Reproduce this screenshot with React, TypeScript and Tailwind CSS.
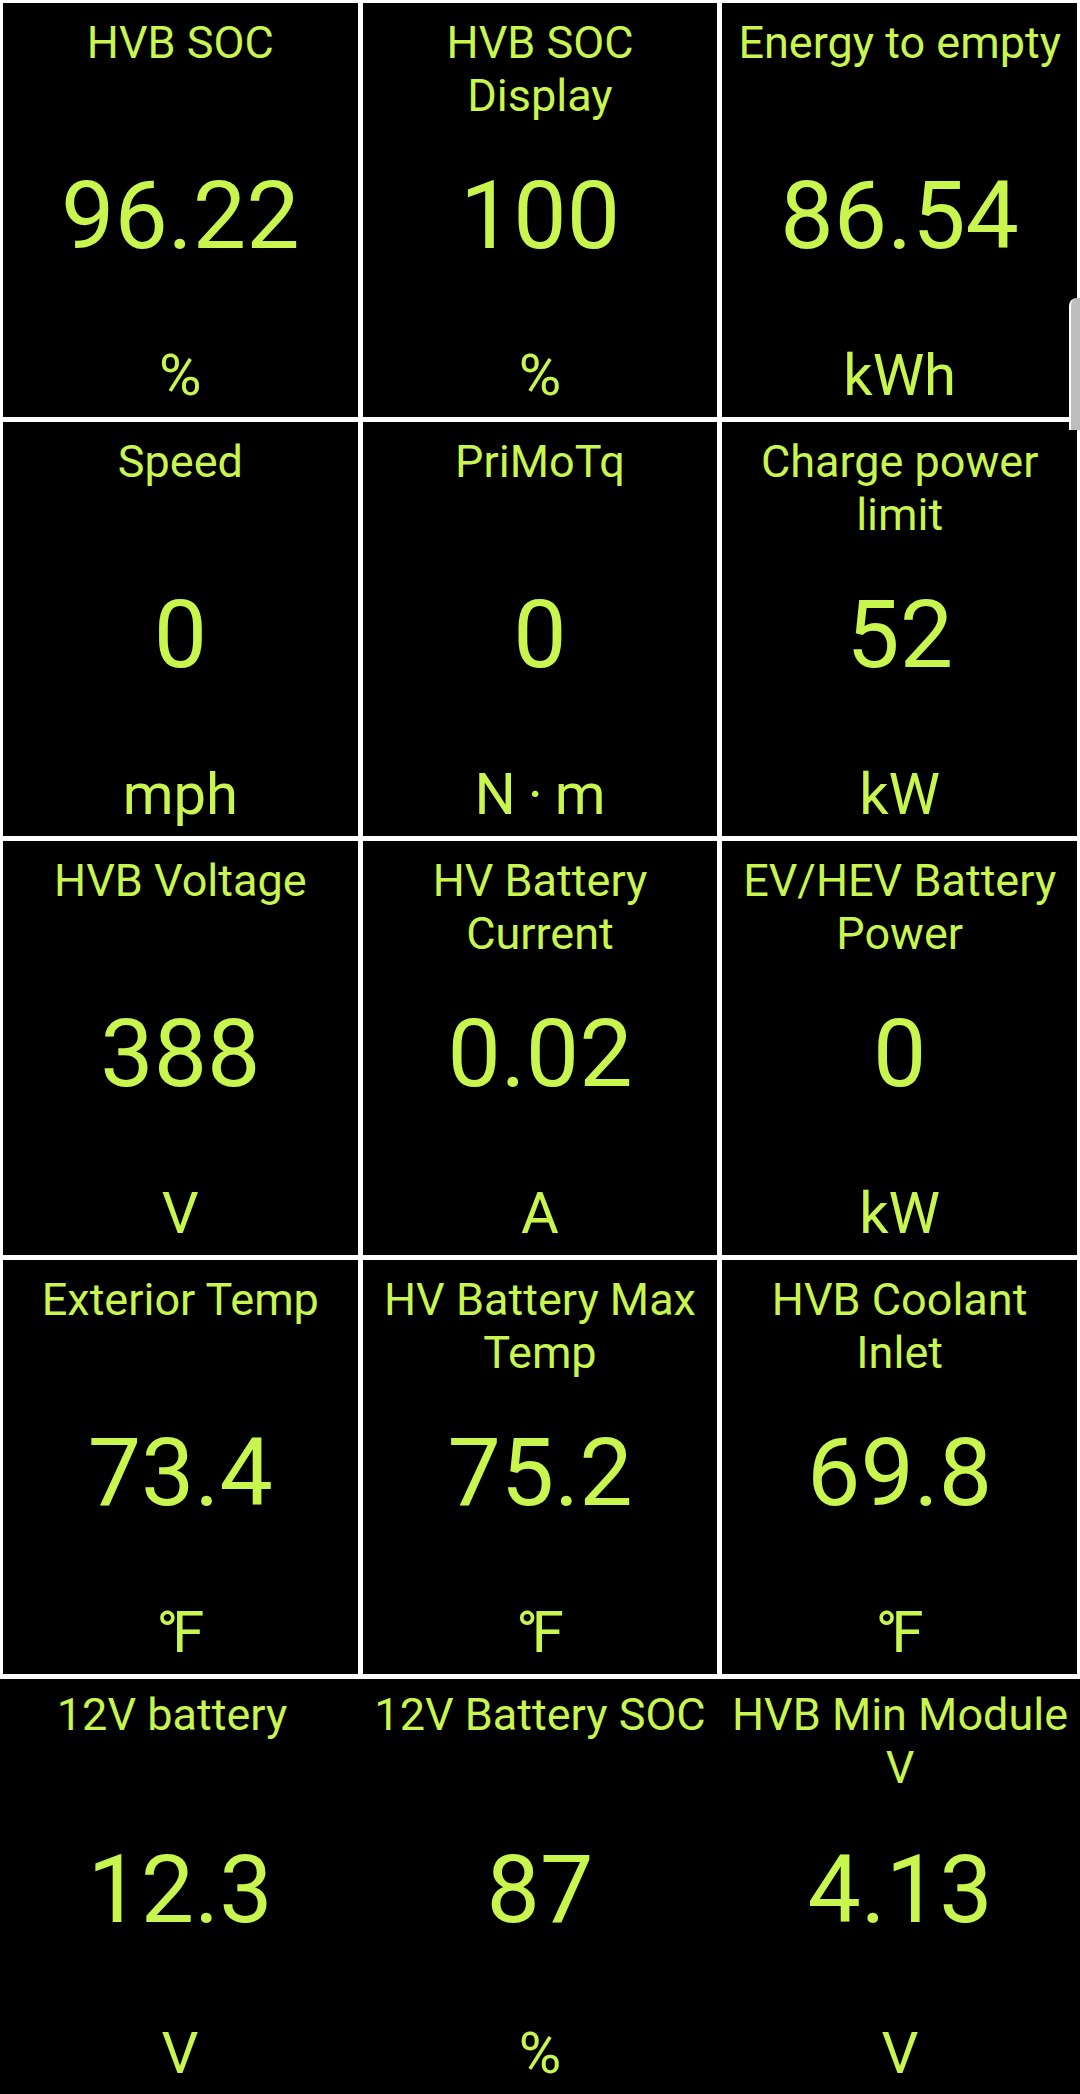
import React from "react";

type Item = { title: string; value: string; unit: string; titleClass?: string };

const rows: Item[][] = [
  [
    { title: "HVB SOC", value: "96.22", unit: "%" },
    { title: "HVB SOC Display", value: "100", unit: "%" },
    { title: "Energy to empty", value: "86.54", unit: "kWh" },
  ],
  [
    { title: "Speed", value: "0", unit: "mph" },
    { title: "PriMoTq", value: "0", unit: "N\u2009·\u2009m" },
    { title: "Charge power limit", value: "52", unit: "kW" },
  ],
  [
    { title: "HVB Voltage", value: "388", unit: "V" },
    { title: "HV Battery Current", value: "0.02", unit: "A" },
    { title: "EV/HEV Battery Power", value: "0", unit: "kW" },
  ],
  [
    { title: "Exterior Temp", value: "73.4", unit: "°F" },
    { title: "HV Battery Max Temp", value: "75.2", unit: "°F" },
    { title: "HVB Coolant Inlet", value: "69.8", unit: "°F" },
  ],
];

const lastRow: Item[] = [
  { title: "12V battery", value: "12.3", unit: "V", titleClass: "pr-[18px]" },
  { title: "12V Battery SOC", value: "87", unit: "%" },
  { title: "HVB Min Module V", value: "4.13", unit: "V" },
];

function Unit({ unit }: { unit: string }) {
  if (unit === "°F") {
    return (
      <span>
        <span className="tracking-[-6px]">°</span>F
      </span>
    );
  }
  return <span>{unit}</span>;
}

function Cell({ item, last }: { item: Item; last?: boolean }) {
  return (
    <div
      className={
        last
          ? "flex h-[415px] flex-col items-center bg-black pt-[9px] pb-[12px] text-center text-[#c8f54e]"
          : "flex h-[414px] flex-col items-center bg-black pt-[13px] pb-[13px] text-center text-[#c8f54e]"
      }
    >
      <div
        className={
          (last
            ? "h-[154px] w-full px-[2px] text-[45px] leading-[53px] "
            : "h-[152px] w-full px-[8px] text-[45px] leading-[53px] ") + (item.titleClass ?? "")
        }
      >
        {item.title}
      </div>
      <div className="text-[95px] leading-[95px]">{item.value}</div>
      <div className="flex-1" />
      <div className="whitespace-nowrap text-[58px] leading-[58px]">
        <Unit unit={item.unit} />
      </div>
    </div>
  );
}

export default function App() {
  return (
    <div
      className="relative h-[2094px] w-[1080px] overflow-hidden bg-black"
      style={{ fontFamily: "Roboto, 'Noto Sans', sans-serif" }}
    >
      <div className="grid grid-cols-3 gap-[5px] bg-white p-[3px] pb-[5px]">
        {rows.flat().map((it, i) => (
          <Cell key={i} item={it} />
        ))}
      </div>
      <div className="grid grid-cols-3 bg-black">
        {lastRow.map((it, i) => (
          <Cell key={i} item={it} last />
        ))}
      </div>
      <div className="absolute right-0 top-[298px] h-[132px] w-[11px] rounded-tl-[8px] border-l-2 border-white bg-[#bdbdbd]" />
    </div>
  );
}
